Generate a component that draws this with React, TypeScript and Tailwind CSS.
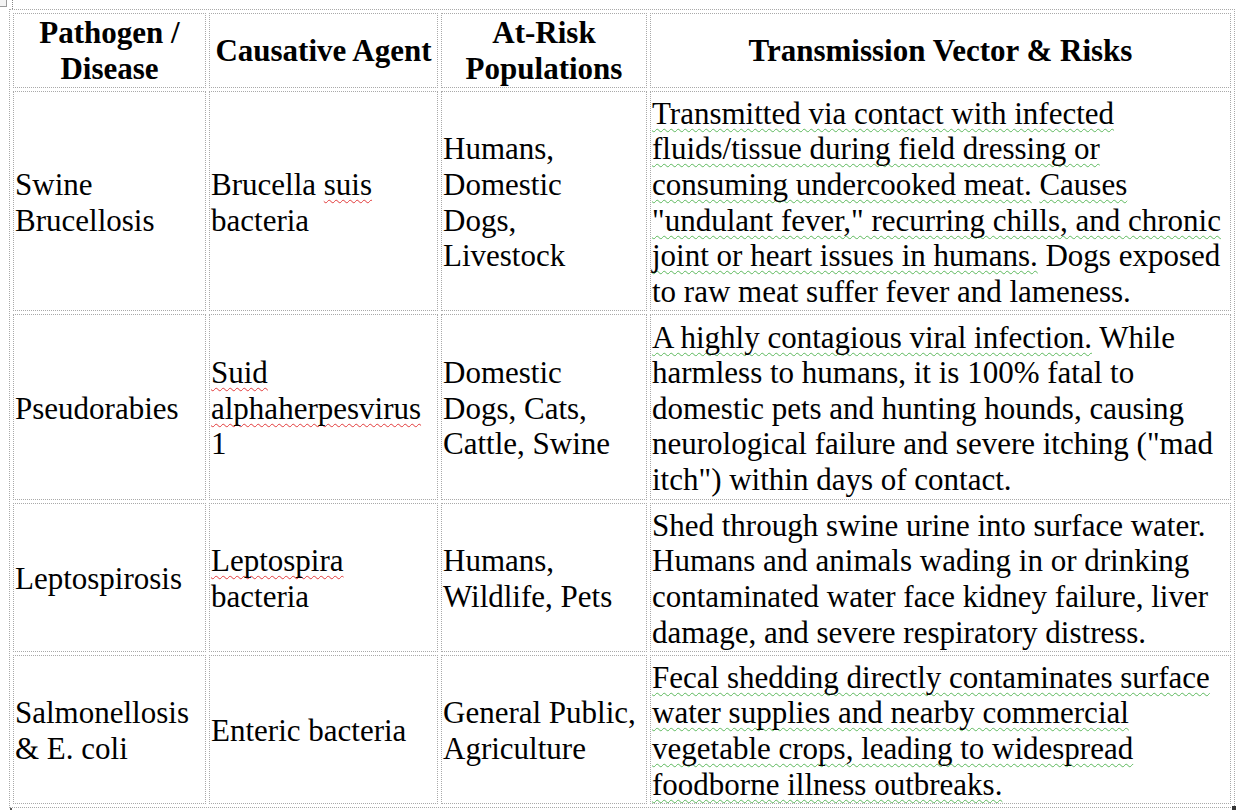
import React from "react";

type Mark = "g" | "r" | undefined;
type Seg = [string, Mark?];
type Line = Seg[];

interface Row {
  height: string;
  cells: Line[][];
}

const headers: string[][] = [
  ["Pathogen /", "Disease"],
  ["Causative Agent"],
  ["At-Risk", "Populations"],
  ["Transmission Vector & Risks"],
];

const rows: Row[] = [
  {
    height: "h-[220px]",
    cells: [
      [[["Swine"]], [["Brucellosis"]]],
      [[["Brucella "], ["suis", "r"]], [["bacteria"]]],
      [[["Humans,"]], [["Domestic"]], [["Dogs,"]], [["Livestock"]]],
      [
        [["Transmitted via contact with infected", "g"]],
        [["fluids/tissue during field dressing or", "g"]],
        [["consuming undercooked meat.", "g"], [" "], ["Causes", "g"]],
        [['"undulant fever," recurring chills, and chronic', "g"]],
        [["joint or heart issues in humans.", "g"], [" Dogs exposed"]],
        [["to raw meat suffer fever and lameness."]],
      ],
    ],
  },
  {
    height: "h-[186px]",
    cells: [
      [[["Pseudorabies"]]],
      [[["Suid", "r"]], [["alphaherpesvirus", "r"]], [["1"]]],
      [[["Domestic"]], [["Dogs, Cats,"]], [["Cattle, Swine"]]],
      [
        [["A highly contagious viral infection.", "g"], [" While"]],
        [["harmless to humans, it is 100% fatal to"]],
        [["domestic pets and hunting hounds, causing"]],
        [['neurological failure and severe itching ("mad']],
        [['itch") within days of contact.']],
      ],
    ],
  },
  {
    height: "h-[149px]",
    cells: [
      [[["Leptospirosis"]]],
      [[["Leptospira", "r"]], [["bacteria"]]],
      [[["Humans,"]], [["Wildlife, Pets"]]],
      [
        [["Shed through swine urine into surface water."]],
        [["Humans and animals wading in or drinking"]],
        [["contaminated water face kidney failure, liver"]],
        [["damage, and severe respiratory distress."]],
      ],
    ],
  },
  {
    height: "h-[149px]",
    cells: [
      [[["Salmonellosis"]], [["& E. coli"]]],
      [[["Enteric bacteria"]]],
      [[["General Public,"]], [["Agriculture"]]],
      [
        [["Fecal shedding directly contaminates surface", "g"]],
        [["water supplies and nearby commercial", "g"]],
        [["vegetable crops, leading to widespread", "g"]],
        [["foodborne illness outbreaks.", "g"]],
      ],
    ],
  },
];

const widths = ["w-[193px]", "w-[229px]", "w-[206px]", "w-[581px]"];

function Segment({ text, mark }: { text: string; mark?: Mark }) {
  if (mark === "g") {
    return (
      <span className="underline decoration-wavy decoration-[#5cb85c] decoration-1 underline-offset-[4px] [text-decoration-skip-ink:none]">
        {text}
      </span>
    );
  }
  if (mark === "r") {
    return (
      <span className="underline decoration-wavy decoration-[#e23a3a] decoration-1 underline-offset-[4px] [text-decoration-skip-ink:none]">
        {text}
      </span>
    );
  }
  return <span>{text}</span>;
}

function CellLines({ lines }: { lines: Line[] }) {
  return (
    <>
      {lines.map((line, i) => (
        <div key={i} className="whitespace-pre">
          {line.map(([text, mark], j) => (
            <Segment key={j} text={text} mark={mark} />
          ))}
        </div>
      ))}
    </>
  );
}

export default function App() {
  return (
    <div className="relative min-h-[811px] bg-white pl-[9px] pt-[9px] font-['Liberation_Serif','Times_New_Roman',serif] text-[31px] leading-[35.6px] text-black">
      {/* word table handles */}
      <div className="absolute left-[-2px] top-[-2px] h-[9px] w-[9px] border border-[#9a9a9a] bg-[#f4f4f4]" />
      <div className="absolute left-[12px] top-0 h-[9px] border-l border-dotted border-[#888]" />
      <div className="absolute left-[10px] top-[808px] h-[2px] w-[2px] bg-[#555]" />
      <div className="absolute left-[1232px] top-[806px] h-[4px] w-[4px] bg-[#333]" />

      <table className="w-[1226px] table-fixed border-separate border-spacing-[3px] border border-dotted border-[#a9a9a9]">
        <thead>
          <tr className="h-[75px]">
            {headers.map((h, i) => (
              <th
                key={i}
                className={`${widths[i]} border border-dotted border-[#a9a9a9] p-0 text-center align-middle font-bold`}
              >
                {h.map((l, j) => (
                  <div key={j} className="whitespace-pre">
                    {l}
                  </div>
                ))}
              </th>
            ))}
          </tr>
        </thead>
        <tbody>
          {rows.map((row, i) => (
            <tr key={i} className={row.height}>
              {row.cells.map((cell, j) => (
                <td
                  key={j}
                  className="border border-dotted border-[#a9a9a9] pt-[3px] pb-0 pl-[1px] pr-0 text-left align-middle"
                >
                  <CellLines lines={cell} />
                </td>
              ))}
            </tr>
          ))}
        </tbody>
      </table>
    </div>
  );
}
